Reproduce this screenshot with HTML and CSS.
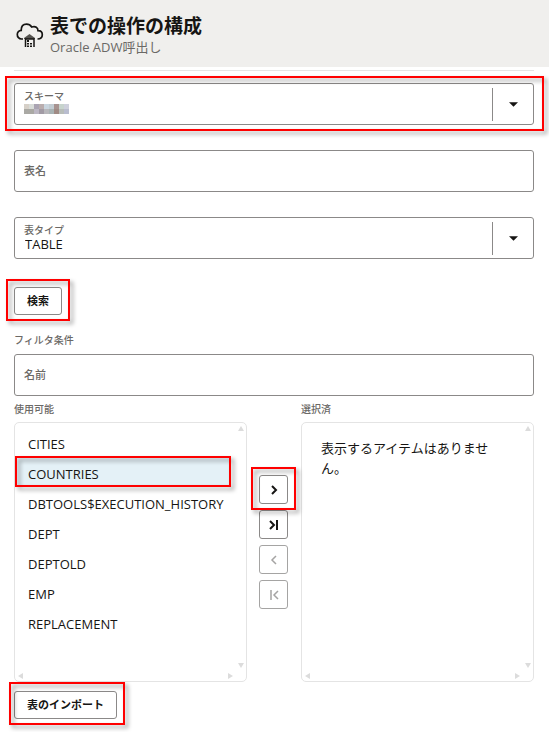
FILE: index.html
```html
<!DOCTYPE html>
<html lang="ja">
<head>
<meta charset="utf-8">
<meta name="viewport" content="width=device-width, initial-scale=1">
<title>表での操作の構成</title>
<link rel="stylesheet" href="styles.css">
</head>
<body>
<header class="header">
  <svg class="header-icon" viewBox="0 0 28 26" aria-hidden="true">
    <path d="M7 17H5.5A4.3 4.3 0 0 1 1.3 12.500A4 4 0 0 1 5.200 8.300C5.200 4.500 7.400 2.200 10.500 2.200C13 2.200 14.500 3.200 15.700 5C19.500 3.700 22 5.600 22 8.700C25 8.800 26.300 10.500 26.300 12.800C26.300 15.400 24.500 17 21.500 17" fill="none" stroke="#161513" stroke-width="1.700"/>
    <path d="M8 16L13.500 12L19 16V17H8Z" fill="#55534f"/>
    <path d="M9.500 25V17H18V25" fill="none" stroke="#161513" stroke-width="1.500"/>
    <path d="M11 18H13V20H11ZM11 21H13V22.500H11ZM11 23.500H13V25H11ZM14 21H16V22.500H14ZM14 23.500H16V25H14Z" fill="#161513"/>
  </svg>
  <div>
    <h1 class="title">表での操作の構成</h1>
    <p class="subtitle">Oracle ADW呼出し</p>
  </div>
</header>
<main class="main">
  <div class="field marked marked-field">
    <label class="field-label" for="schema">スキーマ</label>
    <select class="control" id="schema"><option></option></select>
    <svg class="mosaic" viewBox="0 0 9 2" preserveAspectRatio="none" shape-rendering="crispEdges" aria-hidden="true">
      <path fill="#d6d0c8" d="M0 0h1v1H0z"/><path fill="#d8dcd8" d="M1 0h1v1H1z"/><path fill="#aaa4b2" d="M2 0h1v1H2z"/><path fill="#b9adae" d="M3 0h1v1H3z"/><path fill="#c9d5df" d="M4 0h1v1H4z"/><path fill="#c2ccd2" d="M5 0h1v1H5z"/><path fill="#a79390" d="M6 0h1v1H6z"/><path fill="#c7d4cd" d="M7 0h1v1H7z"/><path fill="#ced0dc" d="M8 0h1v1H8z"/>
      <path fill="#aaa9a4" d="M0 1h2v1H0z"/><path fill="#bcb7c3" d="M2 1h1v1H2z"/><path fill="#a29ba5" d="M3 1h1v1H3z"/><path fill="#b8b7bb" d="M4 1h1v1H4z"/><path fill="#a9b3b4" d="M5 1h1v1H5z"/><path fill="#a08b85" d="M6 1h1v1H6z"/><path fill="#b8bdb9" d="M7 1h1v1H7z"/><path fill="#b9bdcf" d="M8 1h1v1H8z"/>
    </svg>
    <svg class="caret" viewBox="0 0 10 5" aria-hidden="true"><path d="M0 0H10L5 5Z"/></svg>
  </div>
  <div class="field">
    <label class="field-label resting" for="table-name">表名</label>
    <input class="control" id="table-name" type="text">
  </div>
  <div class="field">
    <label class="field-label" for="table-type">表タイプ</label>
    <select class="control" id="table-type"><option>TABLE</option></select>
    <svg class="caret" viewBox="0 0 10 5" aria-hidden="true"><path d="M0 0H10L5 5Z"/></svg>
  </div>
  <div class="marked marked-button search"><button class="button" type="button">検索</button></div>

  <section class="filter">
    <h2 class="caption">フィルタ条件</h2>
    <div class="field">
      <label class="field-label resting" for="name">名前</label>
      <input class="control" id="name" type="text">
    </div>
  </section>

  <div class="shuttle">
    <div class="column">
      <label class="caption" for="available">使用可能</label>
      <div class="panel">
        <select class="list" id="available" multiple size="7">
          <option>CITIES</option>
          <option selected>COUNTRIES</option>
          <option>DBTOOLS$EXECUTION_HISTORY</option>
          <option>DEPT</option>
          <option>DEPTOLD</option>
          <option>EMP</option>
          <option>REPLACEMENT</option>
        </select>
        <span class="row-mark"></span>
        <i class="arrow up"></i><i class="arrow down"></i><i class="arrow left"></i><i class="arrow right"></i>
      </div>
    </div>
    <div class="moves">
      <div class="marked marked-button"><button class="move" type="button" aria-label="移動"><svg viewBox="0 0 12 12"><path d="M4 2L8 6L4 10"/></svg></button></div>
      <button class="move" type="button" aria-label="すべて移動"><svg viewBox="0 0 12 12"><path d="M2 2L6 6L2 10M9 1V11"/></svg></button>
      <button class="move" type="button" aria-label="削除" disabled><svg viewBox="0 0 12 12"><path d="M8 2L4 6L8 10"/></svg></button>
      <button class="move" type="button" aria-label="すべて削除" disabled><svg viewBox="0 0 12 12"><path d="M10 2L6 6L10 10M3 1V11"/></svg></button>
    </div>
    <div class="column">
      <h2 class="caption">選択済</h2>
      <div class="panel">
        <p class="empty">表示するアイテムはありません。</p>
        <i class="arrow up"></i><i class="arrow down"></i><i class="arrow left"></i><i class="arrow right"></i>
      </div>
    </div>
  </div>
  <div class="marked marked-button import"><button class="button" type="button">表のインポート</button></div>
</main>
</body>
</html>
```

FILE: styles.css
```css
* { box-sizing: border-box; }

body {
  margin: 0;
  background: #fff;
  color: #161513;
  font-family: "Open Sans", "Noto Sans CJK JP", sans-serif;
  font-size: 13px;
  line-height: 20px;
}

h1, h2, p { margin: 0; }
button, input, select { font: inherit; color: inherit; }

.header {
  display: flex;
  align-items: center;
  gap: 6px;
  height: 67px;
  padding: 2px 16px 0;
  background: #f0efed;
}
.header-icon { width: 28px; height: 26px; }
.title { font-size: 19px; line-height: 24px; font-weight: 700; }
.subtitle { line-height: 18px; color: #6b6966; }

.main {
  margin: 3px 15px 0 14px;
  padding: 12px 0 13px;
  border-top: 1px solid #e4e4e4;
}

/* Form fields: label, control and decorations share one grid cell */
.field { display: grid; margin-bottom: 25px; }
.field > * { grid-area: 1 / 1; }
.field-label {
  z-index: 1;
  align-self: start;
  justify-self: start;
  margin: 6px 0 0 10px;
  color: #6b6966;
  font-size: 10px;
  line-height: 14px;
  font-weight: 500;
  pointer-events: none;
}
.field-label.resting { align-self: center; margin-top: 0; font-size: 11px; }
.control {
  width: 100%;
  height: 42px;
  padding: 11px 10px 0;
  border: 1px solid #8b8988;
  border-radius: 3px;
  background: #fff;
  appearance: none;
}
input.control { padding-top: 0; }
.caret {
  z-index: 1;
  align-self: center;
  justify-self: end;
  width: 42px;
  height: 33px;
  padding: 14px 16px;
  border-left: 1px solid #8b8988;
  fill: #161513;
  pointer-events: none;
}
.mosaic { z-index: 1; width: 45px; height: 10px; margin: 21px 0 0 10px; }

.button {
  display: block;
  height: 28px;
  padding: 0 12px;
  border: 1px solid #8b8988;
  border-radius: 3px;
  background: #fff;
  font-size: 11px;
  line-height: 16px;
  font-weight: 700;
}

/* Red annotation frames */
.marked { position: relative; width: fit-content; }
.marked-field { width: auto; }
.marked::after, .row-mark {
  content: "";
  position: absolute;
  z-index: 2;
  border: 2px solid #f00;
  filter: drop-shadow(3px 3px 2px rgba(0, 0, 0, .4));
  pointer-events: none;
}
.marked-field::after { inset: -7px -10px -6px -9px; }
.marked-button::after { inset: -8px -8px -6px; }
.import::after { inset: -9px -8px -6px -5px; }
.row-mark { inset: 33px 15px auto 0; height: 31px; }

.search { margin-top: 28px; }
.filter { margin-top: 18px; }
.filter .field { margin: 7px 0 6px; }
.caption {
  display: block;
  color: #6b6966;
  font-size: 10px;
  line-height: 14px;
  font-weight: 500;
}

.shuttle { display: grid; grid-template-columns: 1fr 30px 1fr; gap: 12px; }
.column { min-width: 0; }
.panel {
  position: relative;
  height: 260px;
  margin-top: 6px;
  padding: 4px 16px 16px 1px;
  border: 1px solid #e4e4e4;
  border-radius: 5px;
}
.list {
  display: block;
  width: 100%;
  height: 100%;
  padding: 0;
  border: 0;
  outline: 0;
  background: none;
  overflow: hidden;
}
.list option { height: 30px; padding: 8px 12px 2px; line-height: 20px; }
.list option:checked { background: linear-gradient(#e4f1f7, #e4f1f7); color: #161513; }
.empty { padding: 11px 16px 0 18px; }

.arrow {
  position: absolute;
  width: 6px;
  height: 5px;
  background: #dcdcdc;
}
.up { top: 3px; right: 2px; clip-path: polygon(50% 0, 100% 100%, 0 100%); }
.down { bottom: 13px; right: 2px; clip-path: polygon(0 0, 100% 0, 50% 100%); }
.left { bottom: 2px; left: 3px; width: 5px; height: 6px; clip-path: polygon(0 50%, 100% 0, 100% 100%); }
.right { bottom: 2px; right: 13px; width: 5px; height: 6px; clip-path: polygon(0 0, 100% 50%, 0 100%); }

.moves { display: flex; flex-direction: column; gap: 6px; padding-top: 73px; }
.move {
  display: grid;
  place-items: center;
  width: 29px;
  height: 29px;
  padding: 0;
  border: 1px solid #8b8988;
  border-radius: 3px;
  background: #fff;
}
.move svg { width: 12px; height: 12px; fill: none; stroke: #161513; stroke-width: 2; }
.move:disabled { border-color: #a5a4a3; }
.move:disabled svg { stroke: #a5a4a3; stroke-width: 1.5; }
.import { margin-top: 9px; }
```
